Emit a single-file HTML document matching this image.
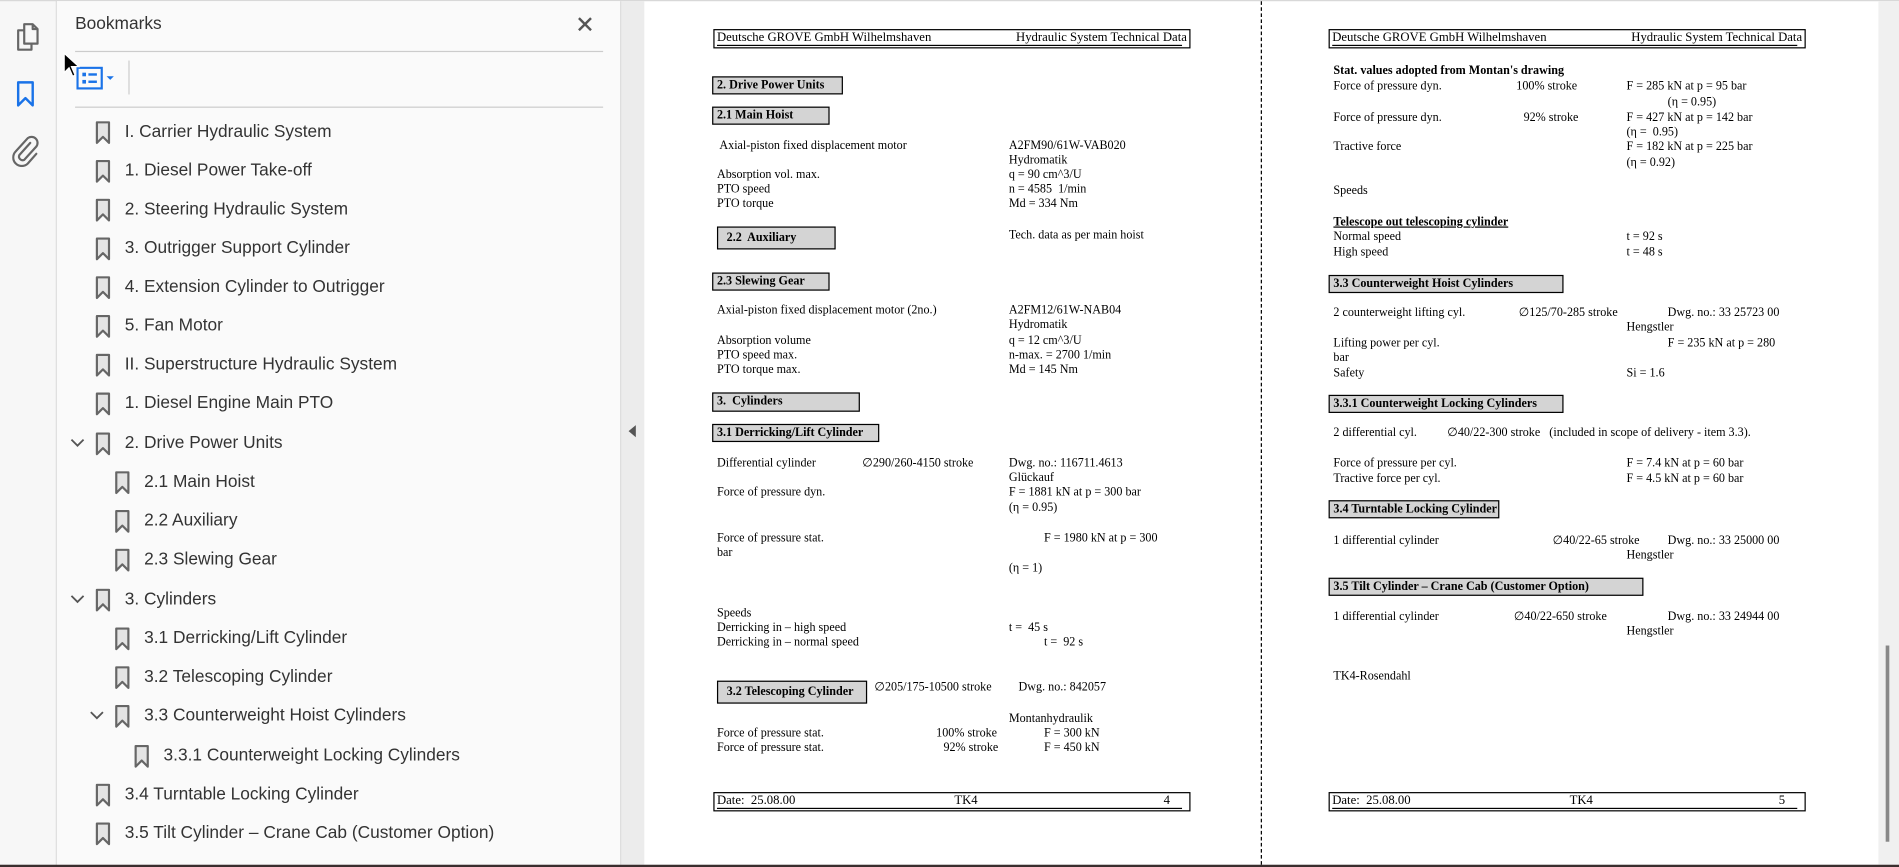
<!DOCTYPE html>
<html><head><meta charset="utf-8">
<style>
html,body{margin:0;padding:0;width:1899px;height:867px;overflow:hidden;background:#fff}
#w{position:absolute;left:0;top:0;width:1568px;height:716px;transform:scale(1.2111);transform-origin:0 0;font-family:"Liberation Sans",sans-serif}
.a{position:absolute}
.t{position:absolute;font:10px/12px "Liberation Serif",serif;white-space:nowrap;color:#000}
.b{position:absolute;background:#d4d4d4;border:1px solid #000;border-right-width:1.5px;border-bottom-width:1.5px;font:bold 10px/13px "Liberation Serif",serif;padding-left:3px;box-sizing:border-box;white-space:nowrap}
.bm{position:absolute;font-size:14.3px;color:#333;white-space:nowrap;line-height:20px}
.bm svg{position:absolute;top:1px}
.hd{position:absolute;border:1px solid #000;border-right-width:1.5px;border-bottom-width:1.5px;height:16px;box-sizing:border-box;font:10.5px/13px "Liberation Serif",serif;white-space:nowrap}
.hd span{position:absolute;top:0;white-space:nowrap}
.hd i{position:absolute;left:2px;right:6px;top:12px;height:0;border-bottom:1px solid #000}
</style></head><body><div id="w">
<!-- left icon strip -->
<div class="a" style="left:0;top:0;width:46px;height:716px;background:#f7f7f7;border-right:1px solid #dcdcdc"></div>
<div class="a" style="left:0;top:0;width:1568px;height:1px;background:#d8d8d8"></div>
<svg class="a" style="left:12px;top:18px" width="22" height="26" viewBox="0 0 22 26"><path d="M8 2h7l4 4v12H8z M15 2v4h4" fill="none" stroke="#666" stroke-width="1.8" stroke-linejoin="round"/><path d="M8 7H3v16h11v-5" fill="none" stroke="#666" stroke-width="1.8" stroke-linejoin="round"/></svg>
<svg class="a" style="left:13px;top:66px" width="16" height="24" viewBox="0 0 16 24"><path d="M2 2h12v19l-6-6-6 6z" fill="none" stroke="#1a73e8" stroke-width="2" stroke-linejoin="round"/></svg>
<svg class="a" style="left:10px;top:112px" width="24" height="26" viewBox="0 0 24 26"><path d="M15 6l-9 10a3 3 0 0 0 4 4l10-11a5 5 0 0 0-7-7L3 13a7 7 0 0 0 10 10l7-8" fill="none" stroke="#666" stroke-width="1.8" stroke-linecap="round"/></svg>
<!-- bookmarks panel -->
<div class="a" style="left:47px;top:1px;width:465px;height:713px;background:#fafafa"></div>
<div class="a" style="left:62px;top:12px;font-size:14.3px;color:#333">Bookmarks</div>
<svg class="a" style="left:476px;top:13px" width="14" height="14" viewBox="0 0 14 14"><path d="M2 2l10 10M12 2L2 12" stroke="#555" stroke-width="2"/></svg>
<div class="a" style="left:62px;top:42px;width:436px;height:1px;background:#ccc"></div>
<svg class="a" style="left:63px;top:55px" width="36" height="20" viewBox="0 0 36 20"><rect x="1" y="1" width="20" height="17" fill="none" stroke="#1a73e8" stroke-width="1.8"/><rect x="5" y="5" width="3" height="3" fill="#1a73e8"/><rect x="5" y="11" width="3" height="3" fill="#1a73e8"/><rect x="10" y="5.5" width="7" height="2" fill="#1a73e8"/><rect x="10" y="11.5" width="7" height="2" fill="#1a73e8"/><path d="M25 8h6l-3 3z" fill="#1a73e8"/></svg>
<div class="a" style="left:106px;top:50px;width:1px;height:28px;background:#ccc"></div>
<div class="a" style="left:62px;top:88px;width:436px;height:1px;background:#ccc"></div>
<svg class="a" style="left:52px;top:43px" width="14" height="22" viewBox="0 0 14 22"><path d="M1 1v16l4-4 3 7 2-1-3-7h6z" fill="#000" stroke="#fff" stroke-width="1"/></svg>

<!-- splitter -->
<div class="a" style="left:512px;top:1px;width:19px;height:713px;background:#ececec;border-left:1px solid #ddd"></div>
<svg class="a" style="left:517px;top:350px" width="10" height="12"><path d="M8 1v10L2 6z" fill="#555"/></svg>
<!-- page area -->
<div class="a" style="left:1041px;top:1px;width:0;height:713px;border-left:1px dashed #000"></div>
<div class="a" style="left:1551px;top:1px;width:17px;height:713px;background:#f0f0f0"></div>
<div class="a" style="left:1557px;top:533px;width:2.5px;height:162px;background:#888"></div>
<div class="a" style="left:0;top:714px;width:1568px;height:2px;background:#3a2e2e"></div>

<!-- page 1 -->
<div class="hd" style="left:589px;top:24px;width:394px"><span style="left:2px">Deutsche GROVE GmbH Wilhelmshaven</span><span style="right:2px">Hydraulic System Technical Data</span><i></i></div>
<div class="b" style="left:588px;top:63px;width:108px;height:15px">2. Drive Power Units</div>
<div class="b" style="left:588px;top:88px;width:97px;height:15px">2.1 Main Hoist</div>
<div class="t" style="left:594px;top:115px">Axial-piston fixed displacement motor</div>
<div class="t" style="left:833px;top:115px">A2FM90/61W-VAB020</div>
<div class="t" style="left:833px;top:127px">Hydromatik</div>
<div class="t" style="left:592px;top:139px">Absorption vol. max.</div><div class="t" style="left:833px;top:139px">q = 90 cm^3/U</div>
<div class="t" style="left:592px;top:151px">PTO speed</div><div class="t" style="left:833px;top:151px">n = 4585&nbsp; 1/min</div>
<div class="t" style="left:592px;top:163px">PTO torque</div><div class="t" style="left:833px;top:163px">Md = 334 Nm</div>
<div class="b" style="left:592px;top:187px;width:98px;height:19px;line-height:17px;padding-left:7px">2.2&nbsp; Auxiliary</div>
<div class="t" style="left:833px;top:189px">Tech. data as per main hoist</div>
<div class="b" style="left:588px;top:225px;width:97px;height:15px">2.3 Slewing Gear</div>
<div class="t" style="left:592px;top:251px">Axial-piston fixed displacement motor (2no.)</div><div class="t" style="left:833px;top:251px">A2FM12/61W-NAB04</div>
<div class="t" style="left:833px;top:263px">Hydromatik</div>
<div class="t" style="left:592px;top:276px">Absorption volume</div><div class="t" style="left:833px;top:276px">q = 12 cm^3/U</div>
<div class="t" style="left:592px;top:288px">PTO speed max.</div><div class="t" style="left:833px;top:288px">n-max. = 2700 1/min</div>
<div class="t" style="left:592px;top:300px">PTO torque max.</div><div class="t" style="left:833px;top:300px">Md = 145 Nm</div>
<div class="b" style="left:588px;top:324px;width:122px;height:16px">3.&nbsp; Cylinders</div>
<div class="b" style="left:588px;top:350px;width:138px;height:15px">3.1 Derricking/Lift Cylinder</div>
<div class="t" style="left:592px;top:377px">Differential cylinder</div><div class="t" style="left:712px;top:377px">∅290/260-4150 stroke</div><div class="t" style="left:833px;top:377px">Dwg. no.: 116711.4613</div>
<div class="t" style="left:833px;top:389px">Glückauf</div>
<div class="t" style="left:592px;top:401px">Force of pressure dyn.</div><div class="t" style="left:833px;top:401px">F = 1881 kN at p = 300 bar</div>
<div class="t" style="left:833px;top:414px">(η = 0.95)</div>
<div class="t" style="left:592px;top:439px">Force of pressure stat.</div><div class="t" style="left:862px;top:439px">F = 1980 kN at p = 300</div>
<div class="t" style="left:592px;top:451px">bar</div>
<div class="t" style="left:833px;top:464px">(η = 1)</div>
<div class="t" style="left:592px;top:501px">Speeds</div>
<div class="t" style="left:592px;top:513px">Derricking in – high speed</div><div class="t" style="left:833px;top:513px">t =&nbsp; 45 s</div>
<div class="t" style="left:592px;top:525px">Derricking in – normal speed</div><div class="t" style="left:862px;top:525px">t =&nbsp; 92 s</div>
<div class="b" style="left:592px;top:562px;width:124px;height:19px;line-height:17px;padding-left:7px">3.2 Telescoping Cylinder</div>
<div class="t" style="left:722px;top:562px">∅205/175-10500 stroke</div><div class="t" style="left:841px;top:562px">Dwg. no.: 842057</div>
<div class="t" style="left:833px;top:588px">Montanhydraulik</div>
<div class="t" style="left:592px;top:600px">Force of pressure stat.</div><div class="t" style="left:773px;top:600px">100% stroke</div><div class="t" style="left:862px;top:600px">F = 300 kN</div>
<div class="t" style="left:592px;top:612px">Force of pressure stat.</div><div class="t" style="left:779px;top:612px">92% stroke</div><div class="t" style="left:862px;top:612px">F = 450 kN</div>
<div class="hd" style="left:589px;top:654px;width:394px"><span style="left:2px">Date:&nbsp; 25.08.00</span><span style="left:198px">TK4</span><span style="right:16px">4</span><i></i></div>

<!-- page 2 -->
<div class="hd" style="left:1097px;top:24px;width:394px"><span style="left:2px">Deutsche GROVE GmbH Wilhelmshaven</span><span style="right:2px">Hydraulic System Technical Data</span><i></i></div>
<div class="t" style="left:1101px;top:53px;font-weight:bold">Stat. values adopted from Montan's drawing</div>
<div class="t" style="left:1101px;top:66px">Force of pressure dyn.</div><div class="t" style="left:1252px;top:66px">100% stroke</div><div class="t" style="left:1343px;top:66px">F = 285 kN at p = 95 bar</div>
<div class="t" style="left:1377px;top:79px">(η = 0.95)</div>
<div class="t" style="left:1101px;top:92px">Force of pressure dyn.</div><div class="t" style="left:1258px;top:92px">92% stroke</div><div class="t" style="left:1343px;top:92px">F = 427 kN at p = 142 bar</div>
<div class="t" style="left:1343px;top:104px">(η =&nbsp; 0.95)</div>
<div class="t" style="left:1101px;top:116px">Tractive force</div><div class="t" style="left:1343px;top:116px">F = 182 kN at p = 225 bar</div>
<div class="t" style="left:1343px;top:129px">(η = 0.92)</div>
<div class="t" style="left:1101px;top:152px">Speeds</div>
<div class="t" style="left:1101px;top:178px;font-weight:bold;text-decoration:underline">Telescope out telescoping cylinder</div>
<div class="t" style="left:1101px;top:190px">Normal speed</div><div class="t" style="left:1343px;top:190px">t = 92 s</div>
<div class="t" style="left:1101px;top:203px">High speed</div><div class="t" style="left:1343px;top:203px">t = 48 s</div>
<div class="b" style="left:1097px;top:227px;width:194px;height:15px">3.3 Counterweight Hoist Cylinders</div>
<div class="t" style="left:1101px;top:253px">2 counterweight lifting cyl.</div><div class="t" style="left:1254px;top:253px">∅125/70-285 stroke</div><div class="t" style="left:1377px;top:253px">Dwg. no.: 33 25723 00</div>
<div class="t" style="left:1343px;top:265px">Hengstler</div>
<div class="t" style="left:1101px;top:278px">Lifting power per cyl.</div><div class="t" style="left:1377px;top:278px">F = 235 kN at p = 280</div>
<div class="t" style="left:1101px;top:290px">bar</div>
<div class="t" style="left:1101px;top:303px">Safety</div><div class="t" style="left:1343px;top:303px">Si = 1.6</div>
<div class="b" style="left:1097px;top:326px;width:194px;height:15px">3.3.1 Counterweight Locking Cylinders</div>
<div class="t" style="left:1101px;top:352px">2 differential cyl.</div><div class="t" style="left:1195px;top:352px">∅40/22-300 stroke&nbsp;&nbsp; (included in scope of delivery - item 3.3).</div>
<div class="t" style="left:1101px;top:377px">Force of pressure per cyl.</div><div class="t" style="left:1343px;top:377px">F = 7.4 kN at p = 60 bar</div>
<div class="t" style="left:1101px;top:390px">Tractive force per cyl.</div><div class="t" style="left:1343px;top:390px">F = 4.5 kN at p = 60 bar</div>
<div class="b" style="left:1097px;top:413px;width:141px;height:15px">3.4 Turntable Locking Cylinder</div>
<div class="t" style="left:1101px;top:441px">1 differential cylinder</div><div class="t" style="left:1282px;top:441px">∅40/22-65 stroke</div><div class="t" style="left:1377px;top:441px">Dwg. no.: 33 25000 00</div>
<div class="t" style="left:1343px;top:453px">Hengstler</div>
<div class="b" style="left:1097px;top:477px;width:260px;height:15px">3.5 Tilt Cylinder – Crane Cab (Customer Option)</div>
<div class="t" style="left:1101px;top:504px">1 differential cylinder</div><div class="t" style="left:1250px;top:504px">∅40/22-650 stroke</div><div class="t" style="left:1377px;top:504px">Dwg. no.: 33 24944 00</div>
<div class="t" style="left:1343px;top:516px">Hengstler</div>
<div class="t" style="left:1101px;top:553px">TK4-Rosendahl</div>
<div class="hd" style="left:1097px;top:654px;width:394px"><span style="left:2px">Date:&nbsp; 25.08.00</span><span style="left:198px">TK4</span><span style="right:16px">5</span><i></i></div>

<!-- bookmarks list -->
<div class="bm" style="left:78px;top:99px"><svg width="14" height="20" viewBox="0 0 14 20" style="left:0"><path d="M2 1h10v17l-5-5-5 5z" fill="#e4e4e4" stroke="#666" stroke-width="1.8" stroke-linejoin="round"/></svg><span style="position:absolute;left:25px">I. Carrier Hydraulic System</span></div>
<div class="bm" style="left:78px;top:131px"><svg width="14" height="20" viewBox="0 0 14 20"><path d="M2 1h10v17l-5-5-5 5z" fill="#e4e4e4" stroke="#666" stroke-width="1.8" stroke-linejoin="round"/></svg><span style="position:absolute;left:25px">1. Diesel Power Take-off</span></div>
<div class="bm" style="left:78px;top:163px"><svg width="14" height="20" viewBox="0 0 14 20"><path d="M2 1h10v17l-5-5-5 5z" fill="#e4e4e4" stroke="#666" stroke-width="1.8" stroke-linejoin="round"/></svg><span style="position:absolute;left:25px">2. Steering Hydraulic System</span></div>
<div class="bm" style="left:78px;top:195px"><svg width="14" height="20" viewBox="0 0 14 20"><path d="M2 1h10v17l-5-5-5 5z" fill="#e4e4e4" stroke="#666" stroke-width="1.8" stroke-linejoin="round"/></svg><span style="position:absolute;left:25px">3. Outrigger Support Cylinder</span></div>
<div class="bm" style="left:78px;top:227px"><svg width="14" height="20" viewBox="0 0 14 20"><path d="M2 1h10v17l-5-5-5 5z" fill="#e4e4e4" stroke="#666" stroke-width="1.8" stroke-linejoin="round"/></svg><span style="position:absolute;left:25px">4. Extension Cylinder to Outrigger</span></div>
<div class="bm" style="left:78px;top:259px"><svg width="14" height="20" viewBox="0 0 14 20"><path d="M2 1h10v17l-5-5-5 5z" fill="#e4e4e4" stroke="#666" stroke-width="1.8" stroke-linejoin="round"/></svg><span style="position:absolute;left:25px">5. Fan Motor</span></div>
<div class="bm" style="left:78px;top:291px"><svg width="14" height="20" viewBox="0 0 14 20"><path d="M2 1h10v17l-5-5-5 5z" fill="#e4e4e4" stroke="#666" stroke-width="1.8" stroke-linejoin="round"/></svg><span style="position:absolute;left:25px">II. Superstructure Hydraulic System</span></div>
<div class="bm" style="left:78px;top:323px"><svg width="14" height="20" viewBox="0 0 14 20"><path d="M2 1h10v17l-5-5-5 5z" fill="#e4e4e4" stroke="#666" stroke-width="1.8" stroke-linejoin="round"/></svg><span style="position:absolute;left:25px">1. Diesel Engine Main PTO</span></div>
<svg class="a" style="left:57px;top:361px" width="14" height="10"><path d="M2 2l5 5 5-5" fill="none" stroke="#555" stroke-width="1.5"/></svg>
<div class="bm" style="left:78px;top:356px"><svg width="14" height="20" viewBox="0 0 14 20"><path d="M2 1h10v17l-5-5-5 5z" fill="#e4e4e4" stroke="#666" stroke-width="1.8" stroke-linejoin="round"/></svg><span style="position:absolute;left:25px">2. Drive Power Units</span></div>
<div class="bm" style="left:94px;top:388px"><svg width="14" height="20" viewBox="0 0 14 20"><path d="M2 1h10v17l-5-5-5 5z" fill="#e4e4e4" stroke="#666" stroke-width="1.8" stroke-linejoin="round"/></svg><span style="position:absolute;left:25px">2.1 Main Hoist</span></div>
<div class="bm" style="left:94px;top:420px"><svg width="14" height="20" viewBox="0 0 14 20"><path d="M2 1h10v17l-5-5-5 5z" fill="#e4e4e4" stroke="#666" stroke-width="1.8" stroke-linejoin="round"/></svg><span style="position:absolute;left:25px">2.2 Auxiliary</span></div>
<div class="bm" style="left:94px;top:452px"><svg width="14" height="20" viewBox="0 0 14 20"><path d="M2 1h10v17l-5-5-5 5z" fill="#e4e4e4" stroke="#666" stroke-width="1.8" stroke-linejoin="round"/></svg><span style="position:absolute;left:25px">2.3 Slewing Gear</span></div>
<svg class="a" style="left:57px;top:490px" width="14" height="10"><path d="M2 2l5 5 5-5" fill="none" stroke="#555" stroke-width="1.5"/></svg>
<div class="bm" style="left:78px;top:485px"><svg width="14" height="20" viewBox="0 0 14 20"><path d="M2 1h10v17l-5-5-5 5z" fill="#e4e4e4" stroke="#666" stroke-width="1.8" stroke-linejoin="round"/></svg><span style="position:absolute;left:25px">3. Cylinders</span></div>
<div class="bm" style="left:94px;top:517px"><svg width="14" height="20" viewBox="0 0 14 20"><path d="M2 1h10v17l-5-5-5 5z" fill="#e4e4e4" stroke="#666" stroke-width="1.8" stroke-linejoin="round"/></svg><span style="position:absolute;left:25px">3.1 Derricking/Lift Cylinder</span></div>
<div class="bm" style="left:94px;top:549px"><svg width="14" height="20" viewBox="0 0 14 20"><path d="M2 1h10v17l-5-5-5 5z" fill="#e4e4e4" stroke="#666" stroke-width="1.8" stroke-linejoin="round"/></svg><span style="position:absolute;left:25px">3.2 Telescoping Cylinder</span></div>
<svg class="a" style="left:73px;top:586px" width="14" height="10"><path d="M2 2l5 5 5-5" fill="none" stroke="#555" stroke-width="1.5"/></svg>
<div class="bm" style="left:94px;top:581px"><svg width="14" height="20" viewBox="0 0 14 20"><path d="M2 1h10v17l-5-5-5 5z" fill="#e4e4e4" stroke="#666" stroke-width="1.8" stroke-linejoin="round"/></svg><span style="position:absolute;left:25px">3.3 Counterweight Hoist Cylinders</span></div>
<div class="bm" style="left:110px;top:614px"><svg width="14" height="20" viewBox="0 0 14 20"><path d="M2 1h10v17l-5-5-5 5z" fill="#e4e4e4" stroke="#666" stroke-width="1.8" stroke-linejoin="round"/></svg><span style="position:absolute;left:25px">3.3.1 Counterweight Locking Cylinders</span></div>
<div class="bm" style="left:78px;top:646px"><svg width="14" height="20" viewBox="0 0 14 20"><path d="M2 1h10v17l-5-5-5 5z" fill="#e4e4e4" stroke="#666" stroke-width="1.8" stroke-linejoin="round"/></svg><span style="position:absolute;left:25px">3.4 Turntable Locking Cylinder</span></div>
<div class="bm" style="left:78px;top:678px"><svg width="14" height="20" viewBox="0 0 14 20"><path d="M2 1h10v17l-5-5-5 5z" fill="#e4e4e4" stroke="#666" stroke-width="1.8" stroke-linejoin="round"/></svg><span style="position:absolute;left:25px">3.5 Tilt Cylinder – Crane Cab (Customer Option)</span></div>
</div></body></html>
